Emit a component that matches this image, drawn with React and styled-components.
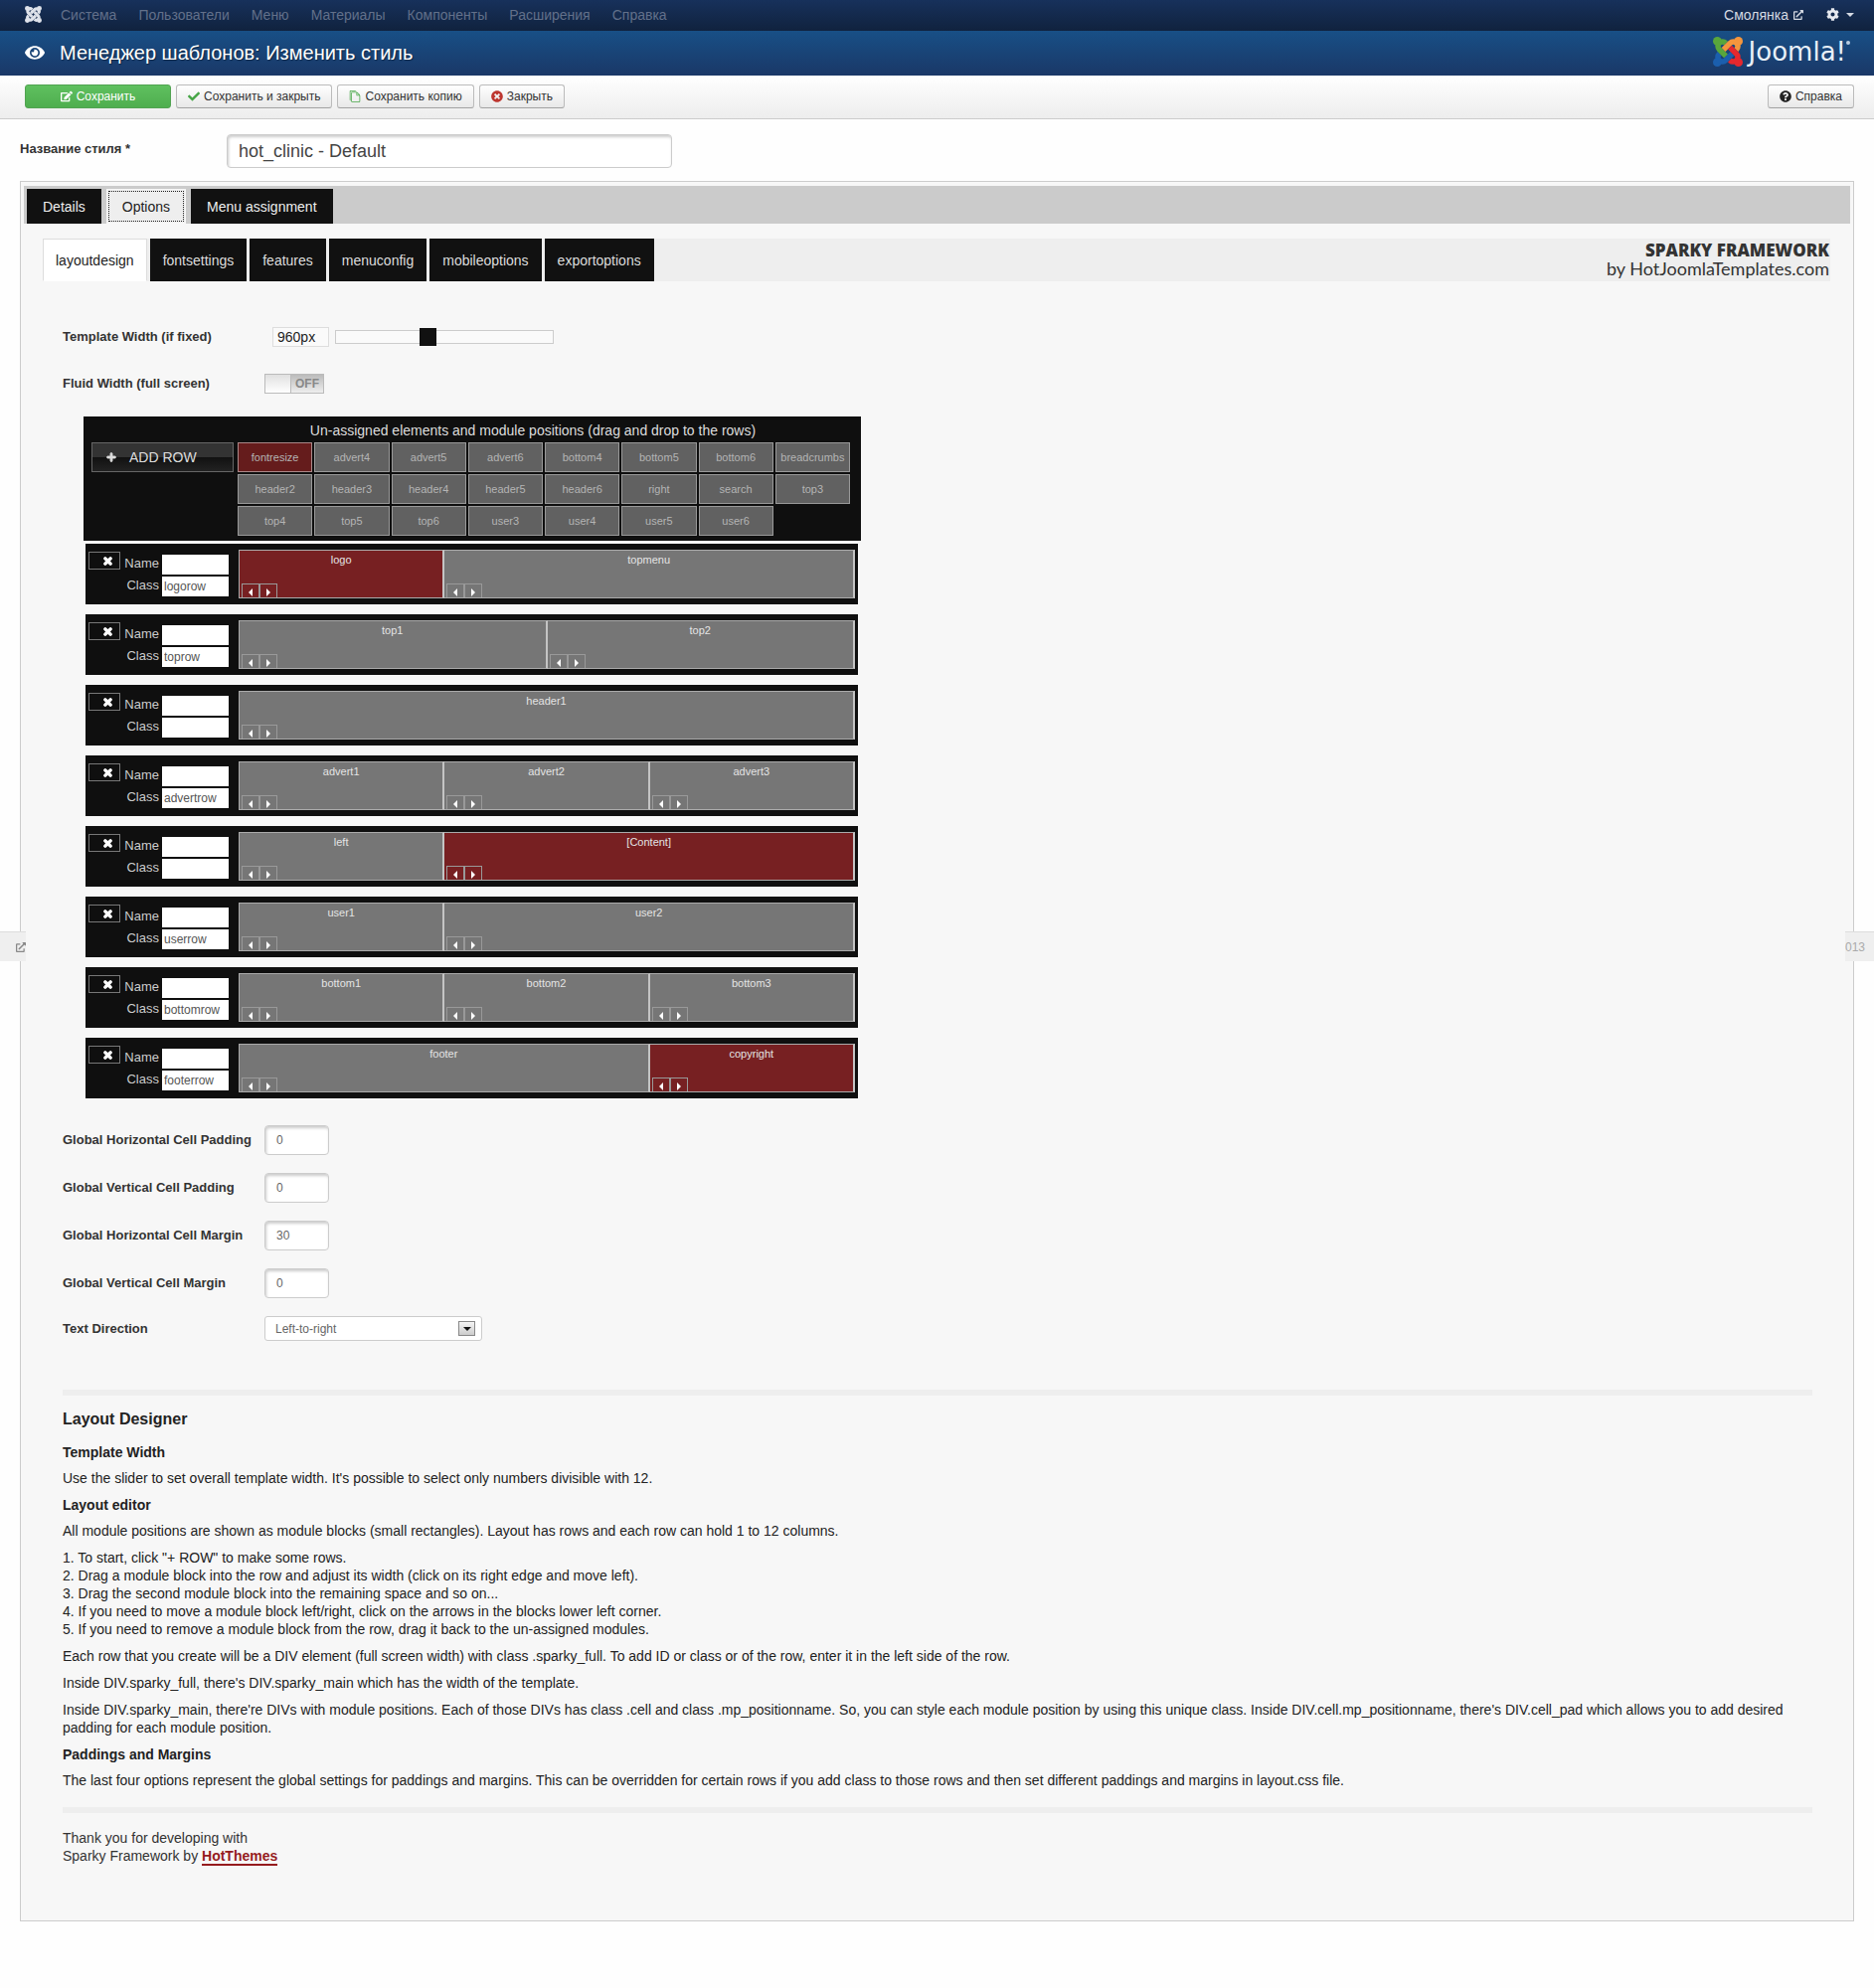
/**********************
 * Template style editor: admin chrome, tabs, layout designer and help text *
 **********************/

import React, { useState } from "react";
import styled, { createGlobalStyle } from "styled-components";
import {
  FaCheck,
  FaCog,
  FaEdit,
  FaExternalLinkAlt,
  FaEye,
  FaPlus,
  FaQuestionCircle,
  FaTimes,
  FaTimesCircle,
} from "react-icons/fa";
import { ImFilesEmpty } from "react-icons/im";

const MENU = [
  "Система",
  "Пользователи",
  "Меню",
  "Материалы",
  "Компоненты",
  "Расширения",
  "Справка",
];

const TABS = ["Details", "Options", "Menu assignment"];

const SUB_TABS = [
  "layoutdesign",
  "fontsettings",
  "features",
  "menuconfig",
  "mobileoptions",
  "exportoptions",
];

const UNASSIGNED = [
  "fontresize", "advert4", "advert5", "advert6", "bottom4", "bottom5", "bottom6", "breadcrumbs",
  "header2", "header3", "header4", "header5", "header6", "right", "search", "top3",
  "top4", "top5", "top6", "user3", "user4", "user5", "user6",
];

// Elements that aren't module positions are shown in red
const ELEMENTS = ["fontresize", "logo", "[Content]", "copyright"];

// Every row is divided in 12 columns
const ROWS = [
  { cls: "logorow", cells: [["logo", 4], ["topmenu", 8]] },
  { cls: "toprow", cells: [["top1", 6], ["top2", 6]] },
  { cls: "", cells: [["header1", 12]] },
  { cls: "advertrow", cells: [["advert1", 4], ["advert2", 4], ["advert3", 4]] },
  { cls: "", cells: [["left", 4], ["[Content]", 8]] },
  { cls: "userrow", cells: [["user1", 4], ["user2", 8]] },
  { cls: "bottomrow", cells: [["bottom1", 4], ["bottom2", 4], ["bottom3", 4]] },
  { cls: "footerrow", cells: [["footer", 8], ["copyright", 4]] },
];

const SPACING = [
  ["Global Horizontal Cell Padding", "0"],
  ["Global Vertical Cell Padding", "0"],
  ["Global Horizontal Cell Margin", "30"],
  ["Global Vertical Cell Margin", "0"],
];

function JoomlaMark({ size, colors }) {
  return (
    <svg width={size} height={size} viewBox="0 0 24 24" aria-hidden="true">
      {colors.map((color, i) => (
        <g key={i} transform={`rotate(${i * 90} 12 12)`}>
          <circle cx="3.5" cy="20.5" r="3.5" fill={color} />
          <path
            d="M5.22 13.57 L5.05 13.75 C3.6 15.2 3.6 17.4 5.05 18.9 C6.5 20.35 8.8 20.35 10.2 18.9 L15.5 13.6"
            fill="none"
            stroke={color}
            strokeWidth="4.4"
          />
        </g>
      ))}
    </svg>
  );
}

function Arrow({ left }) {
  return (
    <svg width="4" height="8" viewBox="0 0 4 8" aria-hidden="true">
      <path d={left ? "M4 0 L0 4 L4 8 Z" : "M0 0 L4 4 L0 8 Z"} fill="#fff" />
    </svg>
  );
}

function LayoutRow({ index, cls, cells }) {
  return (
    <Row>
      <RemoveButton type="button" aria-label="Remove row">
        <FaTimes size={11} stroke="currentColor" strokeWidth={60} />
      </RemoveButton>
      <RowFields>
        <label htmlFor={`name${index}`}>Name</label>
        <RowInput id={`name${index}`} />
        <label htmlFor={`class${index}`}>Class</label>
        <RowInput id={`class${index}`} defaultValue={cls} />
      </RowFields>
      <Cells>
        {cells.map(([name, span]) => (
          <Cell key={name} $span={span} $red={ELEMENTS.includes(name)}>
            {name}
            <Movers>
              <MoveButton type="button" aria-label="Move left">
                <Arrow left />
              </MoveButton>
              <MoveButton type="button" aria-label="Move right">
                <Arrow />
              </MoveButton>
            </Movers>
          </Cell>
        ))}
      </Cells>
    </Row>
  );
}

export default function App() {
  const [tab, setTab] = useState("Options");
  const [subTab, setSubTab] = useState("layoutdesign");
  const [width, setWidth] = useState(960);
  const [fluid, setFluid] = useState(false);

  return (
    <Page>
      <GlobalStyle />
      <NavBar>
        <JoomlaMark size={17} colors={["#dfe3ea", "#dfe3ea", "#dfe3ea", "#dfe3ea"]} />
        <Menu>
          {MENU.map((item) => (
            <MenuLink key={item} href="#">
              {item}
            </MenuLink>
          ))}
        </Menu>
        <SiteLink href="#">
          Смолянка <FaExternalLinkAlt size={10} />
        </SiteLink>
        <CogButton type="button" aria-label="Настройки">
          <FaCog size={13} />
          <Caret />
        </CogButton>
      </NavBar>

      <Header>
        <FaEye size={20} />
        <Title>Менеджер шаблонов: Изменить стиль</Title>
        <Brand>
          <JoomlaMark size={30} colors={["#1b5fae", "#58a63c", "#f5963c", "#e5282e"]} />
          <BrandText>Joomla!</BrandText>
          <BrandDot />
        </Brand>
      </Header>

      <Toolbar>
        <SaveButton type="button">
          <FaEdit size={12} /> Сохранить
        </SaveButton>
        <ToolButton type="button" $icon="#46a546">
          <FaCheck size={12} /> Сохранить и закрыть
        </ToolButton>
        <ToolButton type="button" $icon="#46a546">
          <ImFilesEmpty size={12} /> Сохранить копию
        </ToolButton>
        <ToolButton type="button" $icon="#bd362f">
          <FaTimesCircle size={12} /> Закрыть
        </ToolButton>
        <HelpButton type="button" $icon="#222">
          <FaQuestionCircle size={12} /> Справка
        </HelpButton>
      </Toolbar>

      <StyleName>
        <StyleLabel htmlFor="stylename">Название стиля *</StyleLabel>
        <StyleInput id="stylename" defaultValue="hot_clinic - Default" />
      </StyleName>

      <Main>
        <Panel>
          <TabBar>
            {TABS.map((name) => (
              <Tab key={name} type="button" $active={tab === name} onClick={() => setTab(name)}>
                {name}
              </Tab>
            ))}
          </TabBar>

          <SubTabBar>
            {SUB_TABS.map((name) => (
              <SubTab
                key={name}
                type="button"
                $active={subTab === name}
                onClick={() => setSubTab(name)}
              >
                {name}
              </SubTab>
            ))}
            <Framework>
              <strong>SPARKY FRAMEWORK</strong>
              <span>by HotJoomlaTemplates.com</span>
            </Framework>
          </SubTabBar>

          <Content>
            <WidthFields>
              <Field>
                <FieldLabel htmlFor="twidth">Template Width (if fixed)</FieldLabel>
                <WidthControls>
                  <WidthInput value={`${width}px`} readOnly aria-label="Width in pixels" />
                  <Slider
                    id="twidth"
                    type="range"
                    min="480"
                    max="1632"
                    step="12"
                    value={width}
                    onChange={(e) => setWidth(Number(e.target.value))}
                  />
                </WidthControls>
              </Field>
              <Field>
                <FieldLabel htmlFor="fluid">Fluid Width (full screen)</FieldLabel>
                <Switch>
                  <Knob
                    id="fluid"
                    type="checkbox"
                    checked={fluid}
                    onChange={() => setFluid(!fluid)}
                  />
                  <span>{fluid ? "ON" : "OFF"}</span>
                </Switch>
              </Field>
            </WidthFields>

            <Designer>
              <Unassigned>
                <AddRow type="button">
                  <FaPlus size={10} stroke="currentColor" strokeWidth={50} /> ADD ROW
                </AddRow>
                <div>
                  <UnassignedTitle>
                    Un-assigned elements and module positions (drag and drop to the rows)
                  </UnassignedTitle>
                  <BlockGrid>
                    {UNASSIGNED.map((name) => (
                      <Block key={name} $red={ELEMENTS.includes(name)}>
                        {name}
                      </Block>
                    ))}
                  </BlockGrid>
                </div>
              </Unassigned>
              <RowList>
                {ROWS.map((row, i) => (
                  <LayoutRow key={i} index={i} cls={row.cls} cells={row.cells} />
                ))}
              </RowList>
            </Designer>

            <SpacingFields>
              {SPACING.map(([label, value]) => (
                <Field key={label}>
                  <FieldLabel htmlFor={label}>{label}</FieldLabel>
                  <SmallInput id={label} defaultValue={value} />
                </Field>
              ))}
              <Field>
                <FieldLabel htmlFor="direction">Text Direction</FieldLabel>
                <SelectWrapper>
                  <Select id="direction" defaultValue="ltr">
                    <option value="ltr">Left-to-right</option>
                    <option value="rtl">Right-to-left</option>
                  </Select>
                  <SelectArrow>
                    <Caret $dark />
                  </SelectArrow>
                </SelectWrapper>
              </Field>
            </SpacingFields>

            <Rule />
            <Help>
              <h3>Layout Designer</h3>
              <h4>Template Width</h4>
              <p>
                Use the slider to set overall template width. It's possible to select only numbers
                divisible with 12.
              </p>
              <h4>Layout editor</h4>
              <p>
                All module positions are shown as module blocks (small rectangles). Layout has rows
                and each row can hold 1 to 12 columns.
              </p>
              <p>
                1. To start, click "+ ROW" to make some rows.
                <br />
                2. Drag a module block into the row and adjust its width (click on its right edge
                and move left).
                <br />
                3. Drag the second module block into the remaining space and so on...
                <br />
                4. If you need to move a module block left/right, click on the arrows in the blocks
                lower left corner.
                <br />
                5. If you need to remove a module block from the row, drag it back to the
                un-assigned modules.
              </p>
              <p>
                Each row that you create will be a DIV element (full screen width) with class
                .sparky_full. To add ID or class or of the row, enter it in the left side of the
                row.
              </p>
              <p>
                Inside DIV.sparky_full, there's DIV.sparky_main which has the width of the template.
              </p>
              <p>
                Inside DIV.sparky_main, there're DIVs with module positions. Each of those DIVs has
                class .cell and class .mp_positionname. So, you can style each module position by
                using this unique class. Inside DIV.cell.mp_positionname, there's DIV.cell_pad which
                allows you to add desired padding for each module position.
              </p>
              <h4>Paddings and Margins</h4>
              <p>
                The last four options represent the global settings for paddings and margins. This
                can be overridden for certain rows if you add class to those rows and then set
                different paddings and margins in layout.css file.
              </p>
            </Help>
            <Rule />
            <Thanks>
              Thank you for developing with
              <br />
              Sparky Framework by <a href="#">HotThemes</a>
            </Thanks>
          </Content>
        </Panel>
        <StatusLeft>
          <FaExternalLinkAlt size={10} />
        </StatusLeft>
        <StatusRight>013</StatusRight>
      </Main>
    </Page>
  );
}

const GlobalStyle = createGlobalStyle`
  * {
    box-sizing: border-box;
  }

  body {
    margin: 0;
    background: #fefefe;
    color: #333;
    font-family: "Liberation Sans", Arial, sans-serif;
    font-size: 13px;
    line-height: 18px;
  }

  button, input, select {
    margin: 0;
    font-family: inherit;
  }

  button {
    cursor: pointer;
  }
`;

const Page = styled.div`
  min-height: 100vh;
`;

const NavBar = styled.nav`
  display: flex;
  align-items: center;
  height: 31px;
  padding: 0 20px 2px 25px;
  background: linear-gradient(#17315b, #10223e);
`;

const Menu = styled.div`
  display: flex;
  flex: 1;
  gap: 22px;
  margin-left: 19px;
`;

const MenuLink = styled.a`
  color: #62708a;
  font-size: 14px;
  text-decoration: none;
`;

const SiteLink = styled.a`
  display: flex;
  align-items: center;
  gap: 5px;
  color: #d5dae3;
  font-size: 14px;
  text-decoration: none;
`;

const CogButton = styled.button`
  display: flex;
  align-items: center;
  gap: 7px;
  margin-left: 23px;
  padding: 0;
  border: 0;
  background: none;
  color: #e6e9ef;
`;

const Caret = styled.span`
  border: 4px solid transparent;
  border-top-color: ${(props) => (props.$dark ? "#111" : "#d5dae3")};
  border-bottom: 0;
`;

const Header = styled.header`
  display: flex;
  align-items: center;
  height: 45px;
  padding: 0 24px 1px 25px;
  background: linear-gradient(#184f86, #1a3867);
  color: #fff;
`;

const Title = styled.h1`
  flex: 1;
  margin: 0 0 0 15px;
  font-size: 20px;
  font-weight: normal;
  line-height: 24px;
  text-shadow: 1px 1px 1px rgba(0, 0, 0, 0.4);
`;

const Brand = styled.div`
  display: flex;
  align-items: center;
  padding-bottom: 3px;
`;

const BrandText = styled.span`
  margin-left: 6px;
  color: #e8f0f8;
  font-family: "DejaVu Sans", sans-serif;
  font-size: 26px;
  font-weight: 400;
  line-height: 30px;
`;

const BrandDot = styled.span`
  width: 4px;
  height: 4px;
  margin-bottom: 18px;
  border-radius: 50%;
  background: #b9cbe0;
`;

const Toolbar = styled.div`
  display: flex;
  align-items: center;
  gap: 5px;
  height: 44px;
  padding: 0 20px 1px 25px;
  border-bottom: 1px solid #ccc;
  background: linear-gradient(#fff, #ededed);
`;

const ToolButton = styled.button`
  display: flex;
  align-items: center;
  justify-content: center;
  gap: 4px;
  height: 24px;
  padding: 0 11px;
  border: 1px solid #bbb;
  border-bottom-color: #a2a2a2;
  border-radius: 3px;
  background: linear-gradient(#fff, #e8e8e8);
  color: #333;
  font-size: 12px;

  svg {
    color: ${(props) => props.$icon};
  }
`;

const SaveButton = styled(ToolButton)`
  width: 147px;
  border-color: #51a351;
  background: linear-gradient(#5fc05f, #4fae4f);
  color: #fff;
`;

const HelpButton = styled(ToolButton)`
  margin-left: auto;
`;

const StyleName = styled.div`
  display: flex;
  padding: 15px 20px 13px;
`;

const StyleLabel = styled.label`
  width: 208px;
  padding-top: 6px;
  font-weight: bold;
`;

const StyleInput = styled.input`
  width: 448px;
  height: 34px;
  padding: 0 11px;
  border: 1px solid #ccc;
  border-radius: 4px;
  background: #fff;
  box-shadow: inset 1px 2px 3px rgba(0, 0, 0, 0.2);
  color: #444;
  font-size: 18px;
`;

const Main = styled.main`
  position: relative;
  padding: 0 20px 67px;
`;

const Panel = styled.section`
  padding: 4px 3px 56px;
  border: 1px solid #ccc;
  background: #f7f7f7;
`;

const TabBar = styled.div`
  display: flex;
  gap: 5px;
  padding: 3px 3px 0;
  background: #cbcbcb;
`;

const Tab = styled.button`
  height: 35px;
  padding: 0 15px;
  border: 1px solid ${(props) => (props.$active ? "#f7f7f7" : "#111")};
  outline: ${(props) => (props.$active ? "1px dotted #222" : "0")};
  outline-offset: -3px;
  background: ${(props) => (props.$active ? "#eee" : "#111")};
  color: ${(props) => (props.$active ? "#222" : "#eee")};
  font-size: 14px;
`;

const SubTabBar = styled.div`
  display: flex;
  gap: 3px;
  margin: 15px 20px 0 19px;
  background: #eee;
`;

const SubTab = styled.button`
  height: 43px;
  padding: 0 12px;
  border: 1px solid ${(props) => (props.$active ? "#ddd" : "#111")};
  border-bottom-color: ${(props) => (props.$active ? "#fff" : "#111")};
  background: ${(props) => (props.$active ? "#fff" : "#111")};
  color: ${(props) => (props.$active ? "#222" : "#ddd")};
  font-size: 14px;
`;

const Framework = styled.div`
  display: grid;
  align-content: center;
  margin-left: auto;
  padding: 0 1px 2px 0;
  color: #333;
  font-family: "Lato", sans-serif;
  font-size: 18px;
  line-height: 19px;
  text-align: right;

  strong {
    font-family: "Open Sans", sans-serif;
    font-size: 17px;
    font-weight: 800;
  }
`;

const Content = styled.div`
  padding: 46px 38px 0 39px;
`;

const WidthFields = styled.div`
  display: grid;
  gap: 27px;
  margin-bottom: 23px;
`;

const Field = styled.div`
  display: flex;
  align-items: center;
`;

const FieldLabel = styled.label`
  width: 203px;
  font-weight: bold;
`;

const WidthControls = styled.div`
  display: flex;
  align-items: center;
  gap: 6px;
  padding-left: 8px;
`;

const WidthInput = styled.input`
  width: 57px;
  height: 20px;
  padding: 0 4px;
  border: 1px solid #ddd;
  background: #fafafa;
  color: #222;
  font-size: 14px;
`;

const Slider = styled.input`
  width: 220px;
  height: 14px;
  border: 1px solid #ccc;
  background: #fafafa;
  appearance: none;

  &::-webkit-slider-thumb {
    width: 17px;
    height: 18px;
    background: #111;
    appearance: none;
  }
`;

const Switch = styled.div`
  display: flex;
  width: 60px;
  height: 20px;
  border: 1px solid #bbb;
  background: linear-gradient(#bbb, #eee);

  span {
    flex: 1;
    color: #888;
    font-size: 12px;
    font-weight: bold;
    text-align: center;
  }
`;

const Knob = styled.input`
  width: 26px;
  height: 18px;
  border-right: 1px solid #bbb;
  background: linear-gradient(#e0e0e0, #fff);
  appearance: none;
`;

const Designer = styled.div`
  width: 782px;
  max-width: 100%;
  margin-left: 21px;
`;

const Unassigned = styled.div`
  display: grid;
  grid-template-columns: 143px 1fr;
  gap: 4px;
  padding: 4px 11px 5px 8px;
  background: #0f0f0f;
`;

const UnassignedTitle = styled.div`
  padding: 1px 22px 3px 0;
  color: #ddd;
  font-size: 14px;
  text-align: center;
`;

const AddRow = styled.button`
  display: flex;
  align-items: center;
  gap: 13px;
  height: 30px;
  margin-top: 22px;
  padding: 0 14px;
  border: 1px solid #666;
  background: linear-gradient(#333 50%, #111 50%, #222);
  color: #ddd;
  font-size: 14px;
`;

const BlockGrid = styled.div`
  display: grid;
  grid-template-columns: repeat(8, 1fr);
  gap: 2px;
`;

const Block = styled.div`
  height: 30px;
  border: 1px solid ${(props) => (props.$red ? "#a88" : "#999")};
  background: ${(props) => (props.$red ? "#651c1c" : "#616161")};
  color: #b4b4b4;
  font-size: 11px;
  line-height: 28px;
  text-align: center;
`;

const RowList = styled.div`
  display: grid;
  gap: 10px;
  padding: 3px 3px 0 2px;
`;

const Row = styled.div`
  display: flex;
  height: 61px;
  padding: 6px 3px;
  background: #0f0f0f;
`;

const RemoveButton = styled.button`
  display: flex;
  align-items: center;
  justify-content: flex-end;
  width: 32px;
  height: 18px;
  margin-top: 2px;
  padding: 0 6px;
  border: 1px solid #777;
  background: none;
  color: #fff;
`;

const RowFields = styled.div`
  display: grid;
  grid-template-columns: 39px 67px;
  grid-auto-rows: 20px;
  gap: 2px 3px;
  align-content: start;
  margin: 5px 10px 0 0;
  color: #ccc;
  text-align: right;
`;

const RowInput = styled.input`
  width: 67px;
  height: 20px;
  padding: 0 2px;
  border: 0;
  background: #fff;
  color: #555;
  font-size: 12px;
`;

const Cells = styled.div`
  display: grid;
  flex: 1;
  grid-template-columns: repeat(12, 1fr);
  border-left: 1px solid #aaa;
`;

const Cell = styled.div`
  display: flex;
  flex-direction: column;
  justify-content: space-between;
  grid-column: span ${(props) => props.$span};
  overflow: hidden;
  border: 1px solid #aaa;
  border-right: 2px solid #c4c4c4;
  border-left: 0;
  background: ${(props) => (props.$red ? "#772022" : "#767676")};
  color: #e4e4e4;
  font-size: 11px;
  text-align: center;
`;

const Movers = styled.div`
  display: flex;
  padding-left: 2px;
`;

const MoveButton = styled.button`
  display: flex;
  align-items: center;
  justify-content: center;
  width: 18px;
  height: 14px;
  padding: 3px 0 0;
  border: 1px solid #999;
  border-bottom: 0;
  background: none;
`;

const SpacingFields = styled.div`
  display: grid;
  gap: 18px;
  margin: 27px 0 49px;
`;

const SmallInput = styled.input`
  width: 65px;
  height: 30px;
  padding: 0 11px;
  border: 1px solid #ccc;
  border-radius: 4px;
  background: #fff;
  box-shadow: inset 1px 2px 3px rgba(0, 0, 0, 0.2);
  color: #666;
  font-size: 12px;
`;

const SelectWrapper = styled.div`
  position: relative;
`;

const Select = styled.select`
  width: 219px;
  height: 25px;
  padding: 0 10px;
  border: 1px solid #ccc;
  border-radius: 3px;
  background: #fff;
  color: #666;
  font-size: 12px;
  appearance: none;
`;

const SelectArrow = styled.span`
  position: absolute;
  top: 5px;
  right: 7px;
  display: flex;
  align-items: center;
  justify-content: center;
  width: 17px;
  height: 15px;
  border: 1px solid #888;
  background: linear-gradient(#f4f4f4, #ccc);
  pointer-events: none;
`;

const Rule = styled.hr`
  height: 6px;
  margin: 0;
  border: 0;
  background: #eee;
`;

const Help = styled.div`
  padding: 15px 0 9px;
  color: #222;
  font-size: 14px;

  h3,
  h4,
  p {
    margin: 0 0 9px;
  }

  h3 {
    margin-bottom: 15px;
    font-size: 16px;
  }

  h4 {
    margin-bottom: 8px;
    font-size: 14px;
  }
`;

const Thanks = styled.p`
  margin: 0;
  padding-top: 16px;
  font-size: 14px;

  a {
    border-bottom: 2px solid #951b1e;
    color: #951b1e;
    font-weight: bold;
    text-decoration: none;
  }
`;

const StatusLeft = styled.div`
  position: absolute;
  top: 755px;
  left: 0;
  display: flex;
  align-items: center;
  justify-content: flex-end;
  width: 26px;
  height: 30px;
  border-top: 1px solid #ddd;
  background: #efefef;
  color: #888;
`;

const StatusRight = styled.div`
  position: absolute;
  top: 755px;
  right: 0;
  padding: 6px 9px 5px 0;
  border-top: 1px solid #ddd;
  background: #efefef;
  color: #aaa;
  font-size: 12px;
`;
